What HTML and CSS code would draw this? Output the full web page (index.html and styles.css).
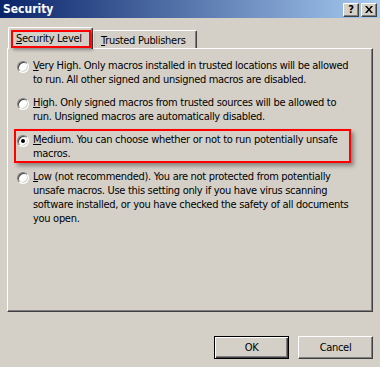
FILE: index.html
```html
<!DOCTYPE html>
<html>
<head>
<meta charset="utf-8">
<link rel="stylesheet" href="styles.css">
</head>
<body>
<div class="dialog">
  <div class="titlebar">
    <span class="title">Security</span>
    <div class="caption-buttons">
      <span class="cbtn">?</span>
      <span class="cbtn close">
        <svg width="8" height="7" viewBox="0 0 8 7"><path d="M0 0h2l2 2.5L6 0h2L5 3.5 8 7H6L4 4.5 2 7H0l3-3.5z" fill="#000"/></svg>
      </span>
    </div>
  </div>

  <div class="tabs">
    <div class="tab active"><span class="mark"><u>S</u>ecurity Level</span></div>
    <div class="tab"><u>T</u>rusted Publishers</div>
  </div>

  <div class="panel">
    <div class="option">
      <span class="radio"></span>
      <span class="label"><u>V</u>ery High. Only macros installed in trusted locations will be allowed<br>to run. All other signed and unsigned macros are disabled.</span>
    </div>
    <div class="option">
      <span class="radio"></span>
      <span class="label"><u>H</u>igh. Only signed macros from trusted sources will be allowed to<br>run. Unsigned macros are automatically disabled.</span>
    </div>
    <div class="option highlight">
      <span class="radio checked"></span>
      <span class="label"><u>M</u>edium. You can choose whether or not to run potentially unsafe<br>macros.</span>
    </div>
    <div class="option">
      <span class="radio"></span>
      <span class="label"><u>L</u>ow (not recommended). You are not protected from potentially<br>unsafe macros. Use this setting only if you have virus scanning<br>software installed, or you have checked the safety of all documents<br>you open.</span>
    </div>
  </div>

  <div class="buttons">
    <span class="btn default">OK</span>
    <span class="btn">Cancel</span>
  </div>
</div>
</body>
</html>
```

FILE: styles.css
```css
html, body {
  margin: 0;
  padding: 0;
  background: #d4d0c8;
}

.dialog {
  width: 380px;
  height: 367px;
  background: #d4d0c8;
  font-family: "DejaVu Sans Condensed", "DejaVu Sans", sans-serif;
  font-size: 11px;
  letter-spacing: -0.3px;
  color: #000;
  display: flex;
  flex-direction: column;
  overflow: hidden;
}

u { text-decoration: underline; text-underline-offset: 1px; }

/* title bar */
.titlebar {
  height: 18px;
  background: linear-gradient(to right, #0a246a, #a6caf0);
  display: flex;
  align-items: center;
  justify-content: space-between;
  padding: 0 3px;
}
.title {
  color: #fff;
  font-weight: bold;
  font-size: 12px;
  letter-spacing: 0;
  line-height: 18px;
}
.caption-buttons {
  display: flex;
  gap: 2px;
  margin-top: 1px;
}
.cbtn {
  width: 16px;
  height: 14px;
  box-sizing: border-box;
  background: #d4d0c8;
  border: 1px solid;
  border-color: #fff #404040 #404040 #fff;
  box-shadow: inset -1px -1px #808080;
  display: flex;
  align-items: center;
  justify-content: center;
  font-weight: bold;
  font-size: 11px;
  letter-spacing: 0;
  line-height: 12px;
}

/* tabs */
.tabs {
  display: flex;
  align-items: flex-end;
  margin-top: 9px;
  padding-left: 8px;
  height: 21px;
}
.tab {
  box-sizing: border-box;
  background: #d4d0c8;
  border-top: 1px solid #fff;
  border-left: 1px solid #fff;
  border-right: 1px solid #404040;
  box-shadow: inset -1px 0 #808080;
  border-radius: 2px 2px 0 0;
  line-height: 14px;
  white-space: nowrap;
}
.tab.active {
  width: 85px;
  height: 22px;
  margin-bottom: -1px;
  position: relative;
  z-index: 1;
  padding: 2px 0 0 2px;
}
.tab:not(.active) {
  width: 104px;
  height: 18px;
  padding: 3px 0 0 7px;
}
.mark {
  display: block;
  width: 80px;
  height: 18px;
  box-sizing: border-box;
  border: 2px solid #f00;
  padding-left: 3px;
  box-shadow: 2px 2px 3px rgba(0, 0, 0, 0.35);
}

/* panel */
.panel {
  margin: 0 7px;
  height: 264px;
  box-sizing: border-box;
  border-top: 1px solid #fff;
  border-left: 1px solid #fff;
  border-right: 1px solid #404040;
  border-bottom: 1px solid #404040;
  box-shadow: inset -1px -1px #808080;
  padding-top: 10px;
  display: flex;
  flex-direction: column;
  gap: 9px;
}
.option {
  display: flex;
  align-items: flex-start;
  padding-left: 9px;
  line-height: 14px;
  white-space: nowrap;
}
.option.highlight {
  width: 337px;
  box-sizing: border-box;
  margin: -4px 0 -2px 6px;
  padding: 2px 0 0 1px;
  border: 2px solid #f00;
  box-shadow: 3px 3px 4px rgba(0, 0, 0, 0.35);
}
.radio {
  flex: none;
  width: 12px;
  height: 12px;
  margin-top: 2px;
  margin-right: 4px;
  box-sizing: border-box;
  border-radius: 50%;
  background: #fff;
  border: 1px solid;
  border-color: #808080 #fff #fff #808080;
  box-shadow: inset 1px 1px #404040, inset -1px -1px #d4d0c8;
  display: flex;
  align-items: center;
  justify-content: center;
}
.radio.checked::after {
  content: "";
  width: 4px;
  height: 4px;
  border-radius: 50%;
  background: #000;
}

/* buttons */
.buttons {
  display: flex;
  justify-content: flex-end;
  gap: 9px;
  padding-right: 7px;
  margin-top: 24px;
}
.btn {
  width: 75px;
  height: 23px;
  box-sizing: border-box;
  border: 1px solid;
  border-color: #fff #404040 #404040 #fff;
  box-shadow: inset -1px -1px #808080;
  display: flex;
  align-items: center;
  justify-content: center;
}
.btn.default {
  border-color: #000;
  box-shadow: inset 1px 1px #fff, inset -1px -1px #404040, inset -2px -2px #808080;
}
```
